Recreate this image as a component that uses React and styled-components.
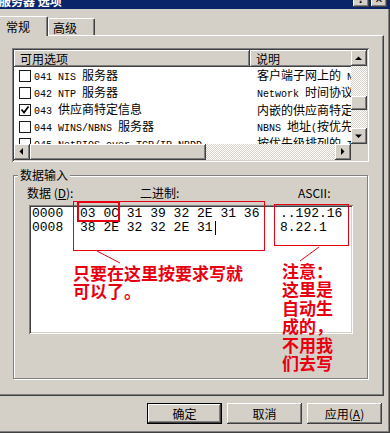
import React from "react";
import styled, { createGlobalStyle, css } from "styled-components";

const face = "#d4d0c8";
const shadow = "#808080";
const dark = "#404040";
const red = "#e80010";

const GlobalStyle = createGlobalStyle`
  html, body {
    margin: 0;
    padding: 0;
    background: ${face};
  }
  body {
    font-family: "Noto Sans CJK SC", "Liberation Sans", sans-serif;
    font-size: 12px;
    color: #000;
  }
`;

const raised = css`
  background: ${face};
  box-shadow: inset -1px -1px ${dark}, inset 1px 1px #fff,
    inset -2px -2px ${shadow}, inset 2px 2px ${face};
`;

const sunken = css`
  box-shadow: inset 1px 1px ${shadow}, inset -1px -1px #fff,
    inset 2px 2px ${dark}, inset -2px -2px ${face};
`;

const Dialog = styled.div`
  position: relative;
  width: 390px;
  height: 433px;
  box-sizing: border-box;
  overflow: hidden;
  display: flex;
  flex-direction: column;
  background: ${face};
  box-shadow: inset -1px -1px ${dark}, inset -2px -2px ${shadow};
`;

const TitleBar = styled.div`
  flex: none;
  height: 9px;
  background: #0a246a;
  display: flex;
  align-items: flex-end;
  justify-content: space-between;
  overflow: hidden;
  padding-right: 3px;
`;

const TitleText = styled.div`
  color: #fff;
  font-weight: bold;
  font-size: 12px;
  line-height: 14px;
  margin: 0 0 1px -1px;
  white-space: nowrap;
`;

const CaptionButtons = styled.div`
  display: flex;
  gap: 2px;
  margin-bottom: 2px;
`;

const CaptionButton = styled.div`
  ${raised};
  width: 16px;
  height: 14px;
  display: flex;
  align-items: center;
  justify-content: center;
  font-family: "DejaVu Sans", sans-serif;
  font-weight: bold;
  font-size: 10px;
  line-height: 1;
`;

const TabStrip = styled.div`
  flex: none;
  height: 19px;
  margin-top: 7px;
  display: flex;
  align-items: flex-end;
  position: relative;
  z-index: 1;
`;

const Tab = styled.div`
  box-sizing: border-box;
  height: ${(p) => (p.$active ? 20 : 17)}px;
  width: ${(p) => (p.$active ? 50 : 47)}px;
  margin-left: ${(p) => (p.$active ? -2 : 0)}px;
  margin-bottom: ${(p) => (p.$active ? -1 : 0)}px;
  padding: ${(p) => (p.$active ? "0 0 0 7px" : "2px 0 0 4px")};
  background: ${face};
  border-top: 1px solid #fff;
  border-left: 1px solid #fff;
  border-right: 1px solid ${dark};
  border-radius: 2px 2px 0 0;
  box-shadow: inset -1px 0 ${shadow};
  display: flex;
  align-items: center;
  line-height: 14px;
`;

const Panel = styled.div`
  flex: none;
  box-sizing: border-box;
  width: 386px;
  height: 361px;
  margin-left: -2px;
  padding: 12px 0 0 13px;
  border-top: 1px solid #fff;
  border-left: 1px solid #fff;
  border-right: 1px solid ${dark};
  border-bottom: 1px solid ${dark};
  box-shadow: inset -1px -1px ${shadow};
  display: flex;
  flex-direction: column;
`;

const ListView = styled.div`
  ${sunken};
  box-sizing: border-box;
  width: 357px;
  height: 114px;
  padding: 2px;
  background: #fff;
  display: grid;
  grid-template-columns: 1fr 16px;
  grid-template-rows: 1fr 16px;
`;

const ListBody = styled.div`
  overflow: hidden;
  background: #fff;
`;

const HeaderRow = styled.div`
  display: grid;
  grid-template-columns: 236px 120px;
  height: 17px;
`;

const HeaderCell = styled.div`
  ${raised};
  padding-left: 6px;
  line-height: 17px;
  white-space: nowrap;
`;

const Row = styled.div`
  display: grid;
  grid-template-columns: 236px 1fr;
  height: 17px;
  align-items: center;
`;

const Cell = styled.div`
  display: flex;
  align-items: center;
  white-space: nowrap;
  overflow: hidden;
  padding-left: ${(p) => (p.$desc ? 7 : 5)}px;
  line-height: 17px;
`;

const CellText = styled.span`
  white-space: pre;
`;

const Check = styled.span`
  flex: none;
  box-sizing: border-box;
  width: 12px;
  height: 12px;
  margin-right: 3px;
  border: 1px solid #1a1a1a;
  background: #fff;
  display: flex;
  align-items: center;
  justify-content: center;
`;

const Half = styled.span`
  font-family: "Liberation Mono", monospace;
  font-size: 10px;
`;

const VScroll = styled.div`
  display: flex;
  flex-direction: column;
`;

const HScroll = styled.div`
  display: flex;
`;

const Track = styled.div`
  flex: 1;
  display: flex;
  flex-direction: ${(p) => (p.$horizontal ? "row" : "column")};
  background-color: #fff;
  background-image: repeating-conic-gradient(${face} 0 25%, #fff 0 50%);
  background-size: 2px 2px;
`;

const Thumb = styled.div`
  ${raised};
  flex: none;
`;

const ScrollButton = styled.div`
  ${raised};
  flex: none;
  width: 16px;
  height: 16px;
  display: flex;
`;

const Corner = styled.div`
  background: ${face};
`;

const GroupBox = styled.div`
  box-sizing: border-box;
  width: 355px;
  margin: 13px 0 0 1px;
  padding-bottom: 44px;
  border: 1px solid ${shadow};
  box-shadow: 1px 1px #fff, inset 1px 1px #fff;
  display: flex;
  flex-direction: column;
`;

const Legend = styled.div`
  width: max-content;
  margin: -8px 0 0 4px;
  padding: 0 2px;
  background: ${face};
  line-height: 14px;
`;

const Labels = styled.div`
  display: grid;
  grid-template-columns: 113px 158px auto;
  margin-top: 4px;
  padding-left: 13px;
  line-height: 14px;
  white-space: nowrap;
`;

const HexBox = styled.div`
  ${sunken};
  box-sizing: border-box;
  width: 324px;
  height: 129px;
  margin: 5px 0 0 15px;
  padding: 2px 2px 2px 3px;
  background: #fff;
`;

const HexLine = styled.div`
  display: grid;
  grid-template-columns: 48px 200px auto;
  font-family: "Liberation Mono", "Courier New", monospace;
  font-size: 13px;
  line-height: 14px;
  white-space: pre;
`;

const Caret = styled.span`
  display: inline-block;
  width: 1px;
  height: 14px;
  margin-left: 2px;
  background: #000;
  vertical-align: top;
`;

const ButtonRow = styled.div`
  flex: none;
  display: flex;
  justify-content: flex-end;
  gap: 5px;
  margin-top: 7px;
  padding-right: 8px;
`;

const Button = styled.div`
  ${raised};
  box-sizing: border-box;
  width: 75px;
  height: 21px;
  display: flex;
  align-items: center;
  justify-content: center;
  line-height: 14px;
  ${(p) =>
    p.$default &&
    css`
      box-shadow: inset 0 0 0 1px #000, inset -2px -2px ${dark},
        inset 2px 2px #fff, inset -3px -3px ${shadow};
    `}
`;

const Overlay = styled.svg`
  position: absolute;
  left: 0;
  top: 0;
  pointer-events: none;
`;

const Note = styled.div`
  position: absolute;
  left: ${(p) => p.$x}px;
  top: ${(p) => p.$y}px;
  color: ${red};
  font-weight: bold;
  font-size: 17px;
  line-height: ${(p) => p.$lh}px;
  white-space: nowrap;
`;

const mixed = (text) =>
  text
    .split(/([\x20-\x7e]+)/)
    .filter(Boolean)
    .map((part, i) =>
      /^[\x20-\x7e]+$/.test(part) ? <Half key={i}>{part}</Half> : part
    );

const options = [
  { code: "041 NIS 服务器", desc: "客户端子网上的 NIS 服务器地址" },
  { code: "042 NTP 服务器", desc: "Network 时间协议服务器的地址" },
  { code: "043 供应商特定信息", desc: "内嵌的供应商特定选项", checked: true },
  { code: "044 WINS/NBNS 服务器", desc: "NBNS 地址(按优先顺序)" },
  { code: "045 NetBIOS over TCP/IP NBDD", desc: "按优先级排列的 TCP/IP NBDD 地址" },
];

const arrows = {
  up: "4,10 11,10 7.5,6.5",
  down: "4,6.5 11,6.5 7.5,10",
  left: "9,4 9,11 5.5,7.5",
  right: "6,4 6,11 9.5,7.5",
};

const Arrow = ({ dir }) => (
  <ScrollButton>
    <svg width="16" height="16" viewBox="0 0 16 16">
      <polygon points={arrows[dir]} fill="#000" />
    </svg>
  </ScrollButton>
);

const App = () => {
  return (
    <Dialog>
      <GlobalStyle />
      <TitleBar>
        <TitleText>服务器 选项</TitleText>
        <CaptionButtons>
          <CaptionButton>?</CaptionButton>
          <CaptionButton>✕</CaptionButton>
        </CaptionButtons>
      </TitleBar>

      <TabStrip>
        <Tab $active>常规</Tab>
        <Tab>高级</Tab>
      </TabStrip>

      <Panel>
        <ListView>
          <ListBody>
            <HeaderRow>
              <HeaderCell>可用选项</HeaderCell>
              <HeaderCell>说明</HeaderCell>
            </HeaderRow>
            {options.map((o) => (
              <Row key={o.code}>
                <Cell>
                  <Check>
                    {o.checked && (
                      <svg width="10" height="10" viewBox="0 0 10 10">
                        <polyline
                          points="1.5,4.5 4,7.5 8.5,1.5"
                          fill="none"
                          stroke="#000"
                          strokeWidth="1.8"
                        />
                      </svg>
                    )}
                  </Check>
                  <CellText>{mixed(o.code)}</CellText>
                </Cell>
                <Cell $desc>
                  <CellText>{mixed(o.desc)}</CellText>
                </Cell>
              </Row>
            ))}
          </ListBody>
          <VScroll>
            <Arrow dir="up" />
            <Track>
              <Thumb style={{ marginTop: 30, height: 14 }} />
            </Track>
            <Arrow dir="down" />
          </VScroll>
          <HScroll>
            <Arrow dir="left" />
            <Track $horizontal>
              <Thumb style={{ width: 176 }} />
            </Track>
            <Arrow dir="right" />
          </HScroll>
          <Corner />
        </ListView>

        <GroupBox>
          <Legend>数据输入</Legend>
          <Labels>
            <span>
              数据 (<u>D</u>):
            </span>
            <span>二进制:</span>
            <span>ASCII:</span>
          </Labels>
          <HexBox>
            <HexLine>
              <span>0000</span>
              <span>03 0C 31 39 32 2E 31 36</span>
              <span>..192.16</span>
            </HexLine>
            <HexLine>
              <span>0008</span>
              <span>
                38 2E 32 32 2E 31
                <Caret />
              </span>
              <span>8.22.1</span>
            </HexLine>
          </HexBox>
        </GroupBox>
      </Panel>

      <ButtonRow>
        <Button $default>确定</Button>
        <Button>取消</Button>
        <Button>
          应用(<u>A</u>)
        </Button>
      </ButtonRow>

      <Overlay width="390" height="433" viewBox="0 0 390 433">
        <g fill="none" stroke={red}>
          <rect x="73.5" y="201.5" width="191" height="49" strokeWidth="1" />
          <rect x="78" y="202" width="41" height="19" strokeWidth="2" />
          <rect x="274.5" y="204.5" width="74" height="41" strokeWidth="1" />
          <line x1="97" y1="251" x2="120" y2="263" strokeWidth="1" />
          <line x1="319" y1="247" x2="300" y2="261" strokeWidth="1" />
        </g>
      </Overlay>
      <Note $x={73} $y={264} $lh={18}>
        只要在这里按要求写就
        <br />
        可以了。
      </Note>
      <Note $x={282} $y={262} $lh={18.4}>
        注意：
        <br />
        这里是
        <br />
        自动生
        <br />
        成的，
        <br />
        不用我
        <br />
        们去写
      </Note>
    </Dialog>
  );
};

export default App;
